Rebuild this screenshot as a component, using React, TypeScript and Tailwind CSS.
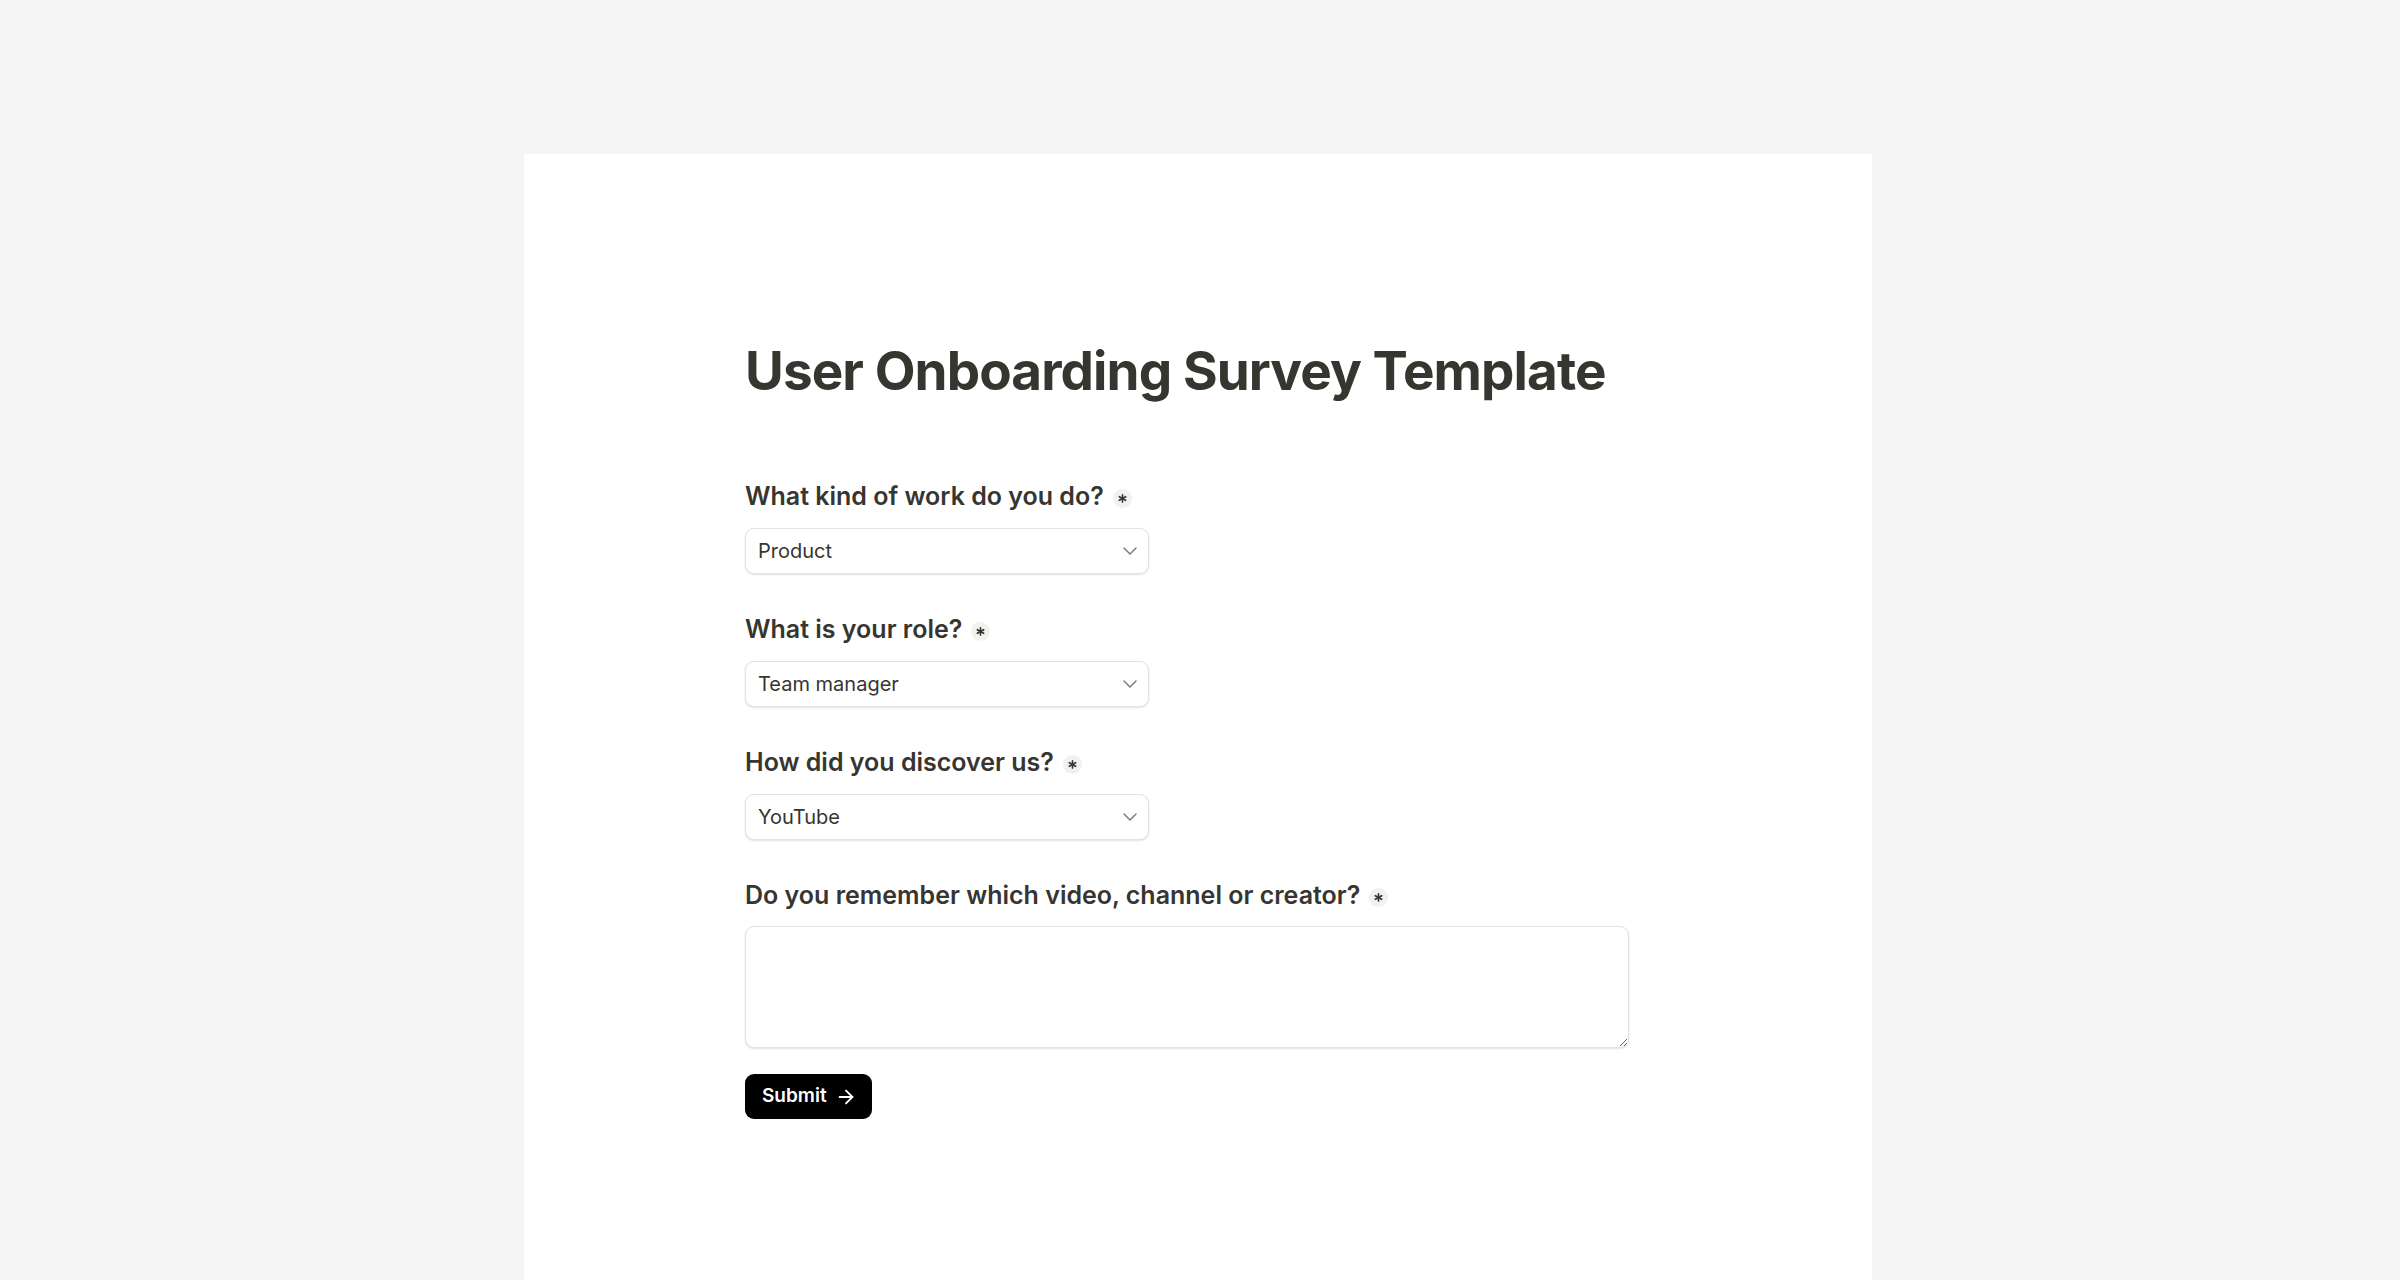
import { ArrowRight, ChevronDown } from 'lucide-react'

type Question = {
  label: string
  value: string
}

const questions: Question[] = [
  { label: 'What kind of work do you do?', value: 'Product' },
  { label: 'What is your role?', value: 'Team manager' },
  { label: 'How did you discover us?', value: 'YouTube' },
]

function Required() {
  return (
    <span className="ml-[9px] inline-flex h-[19px] w-[19px] translate-y-[2px] items-center justify-center rounded-full bg-[#f1f1ef]">
      <svg width="9" height="9" viewBox="0 0 10 10" className="text-[#37352f]">
        <g stroke="currentColor" strokeWidth="1.8" strokeLinecap="round">
          <line x1="5" y1="1" x2="5" y2="9" />
          <line x1="1.5" y1="3" x2="8.5" y2="7" />
          <line x1="1.5" y1="7" x2="8.5" y2="3" />
        </g>
      </svg>
    </span>
  )
}

function Label({ text }: { text: string }) {
  return (
    <div className="flex items-center text-[25px] font-semibold leading-[36px] text-[#37352f]">
      <span>{text}</span>
      <Required />
    </div>
  )
}

export default function App() {
  return (
    <div className="min-h-[1280px] bg-[#f5f5f5] pt-[154px] font-['Inter',sans-serif]">
      <div className="ml-[524px] min-h-[1126px] w-[1348px] bg-white px-[221px] pt-[186px]">
        <h1 className="text-[53px] font-bold leading-[62px] tracking-[-0.017em] text-[#37352f]">
          User Onboarding Survey Template
        </h1>

        <form className="mt-[76px] w-[884px]" onSubmit={(e) => e.preventDefault()}>
          {questions.map((q) => (
            <div key={q.label} className="mb-[37px]">
              <Label text={q.label} />
              <div className="mt-[14px] flex h-[46px] w-[404px] items-center justify-between rounded-[9px] border border-[#e3e2e0] bg-white pl-[12px] pr-[6px] text-[20px] text-[#37352f] shadow-[0_1px_2px_rgba(15,15,15,0.12)]">
                <span>{q.value}</span>
                <ChevronDown className="h-[24px] w-[24px] text-[#7d7c78]" strokeWidth={1.5} />
              </div>
            </div>
          ))}

          <div>
            <Label text="Do you remember which video, channel or creator?" />
            <textarea
              className="mt-[13px] block h-[122px] w-[884px] rounded-[9px] border border-[#e3e2e0] bg-white px-[14px] py-[10px] text-[20px] text-[#37352f] shadow-[0_1px_2px_rgba(15,15,15,0.12)] outline-none"
            />
          </div>

          <button
            type="submit"
            className="mt-[26px] flex h-[45px] items-center gap-[8px] rounded-[9px] bg-black pl-[17px] pr-[15px] text-[19px] font-semibold text-white"
          >
            Submit
            <ArrowRight className="h-[22px] w-[22px]" strokeWidth={2} />
          </button>
        </form>
      </div>
    </div>
  )
}
